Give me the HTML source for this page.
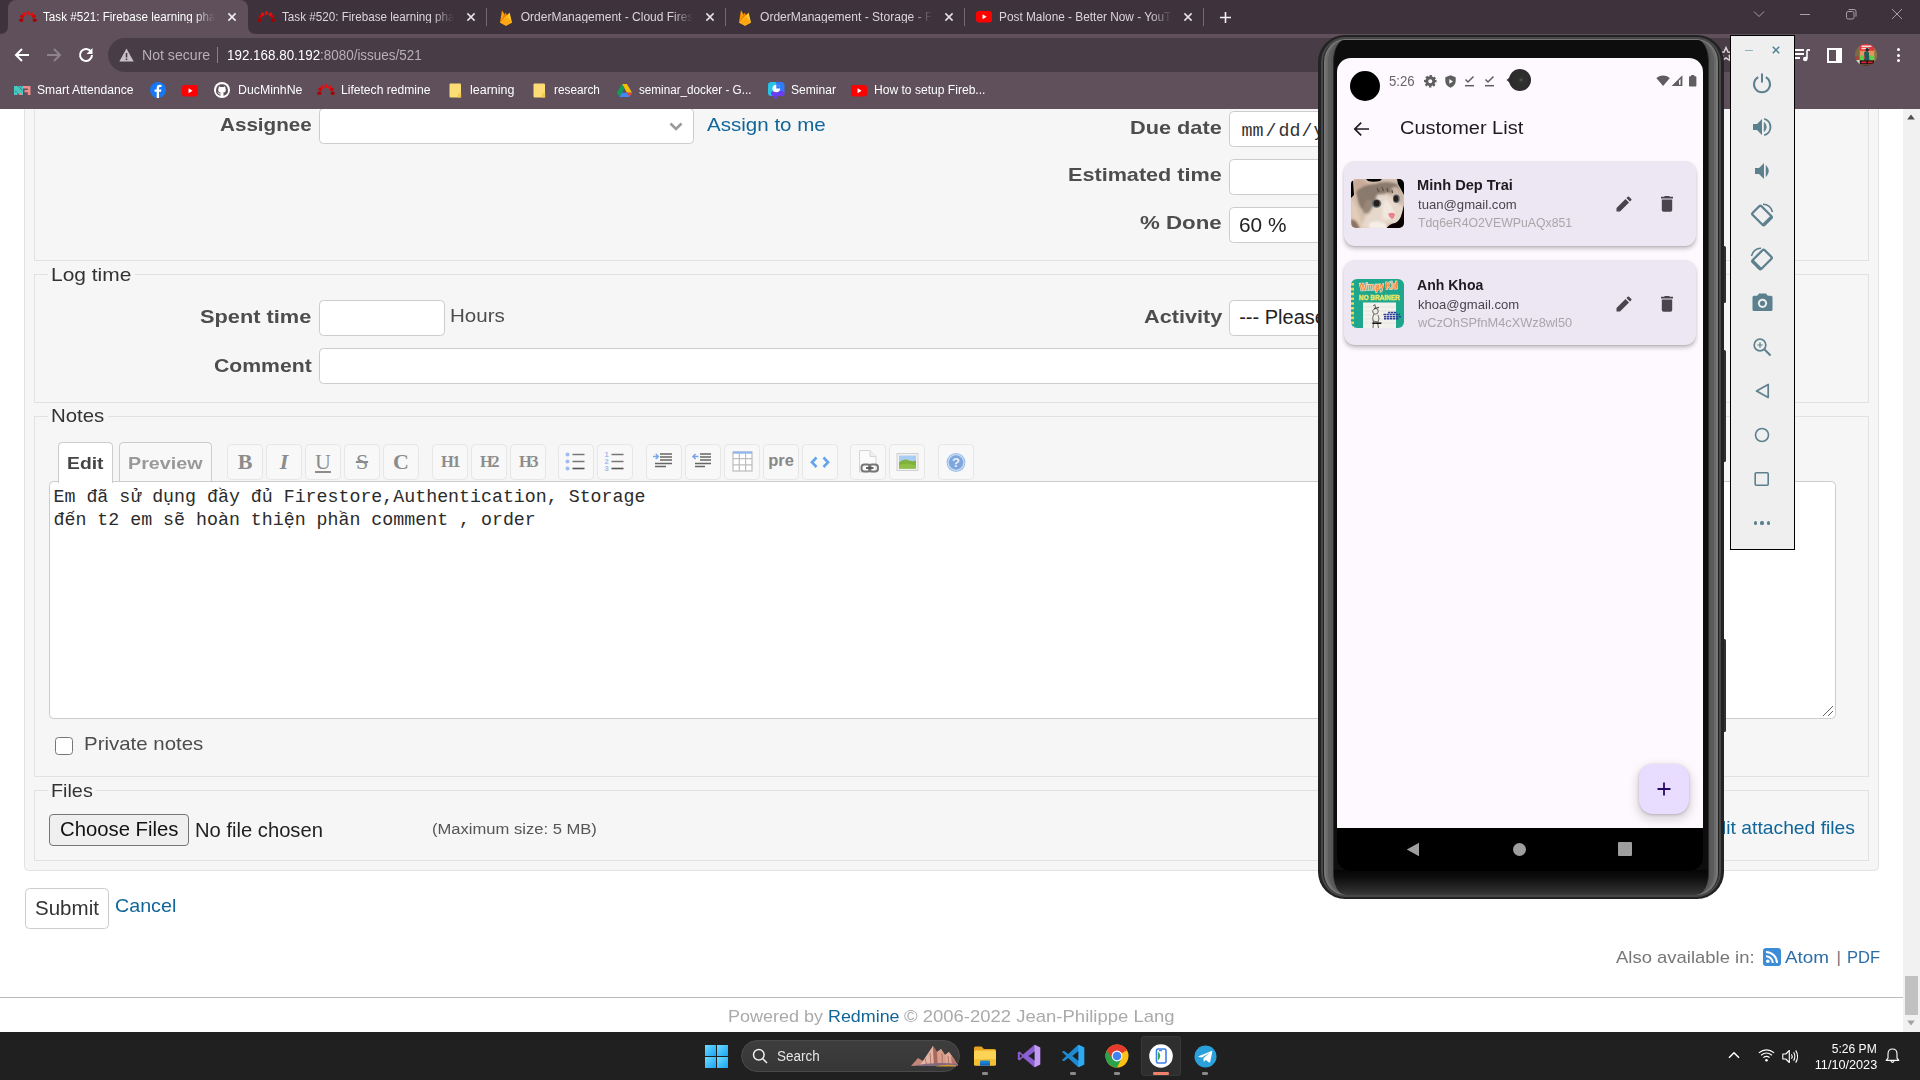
<!DOCTYPE html>
<html><head><meta charset="utf-8"><title>Task #521</title>
<style>
html,body{margin:0;padding:0;background:#fff;}
body{width:1920px;height:1080px;overflow:hidden;position:relative;font-family:"Liberation Sans",sans-serif;}
#root{position:absolute;left:0;top:0;width:1920px;height:1080px;overflow:hidden;}
svg{display:block;overflow:visible}
</style></head><body><div id="root">
<!-- page -->
<div style="position:absolute;left:0px;top:108px;width:1903px;height:924px;background:#fff;"></div>
<div style="position:absolute;left:1903px;top:108px;width:17px;height:924px;background:#f1f1f1;"></div>
<svg style="position:absolute;left:1907px;top:114px;" width="8" height="6" viewBox="0 0 8 6"><path d="M4 0.5 L7.8 5.5 H0.2 Z" fill="#505050"/></svg>
<svg style="position:absolute;left:1907px;top:1020px;" width="8" height="6" viewBox="0 0 8 6"><path d="M4 5.5 L7.8 0.5 H0.2 Z" fill="#a3a3a3"/></svg>
<div style="position:absolute;left:1905px;top:976px;width:13px;height:38.5px;background:#c1c1c1;"></div>
<div style="position:absolute;left:24px;top:90px;width:1855px;height:781px;background:#f6f6f6;box-sizing:border-box;border:1px solid #e2e2e2;border-radius:4.5px;"></div>
<div style="position:absolute;left:34px;top:90px;width:1835px;height:171px;background:transparent;box-sizing:border-box;border:1px solid #e2e2e2;"></div>
<span id="t0" style="position:absolute;top:114.92px;font:700 19px/1 'Liberation Sans',sans-serif;color:#4d4d4d;white-space:pre;left:219.76px;transform-origin:0 0;transform:scaleX(1.0864);">Assignee</span>
<div style="position:absolute;left:319px;top:107.5px;width:375px;height:36px;background:#fff;box-sizing:border-box;border:1px solid #ccc;border-radius:4.5px;"></div>
<svg style="position:absolute;left:668.5px;top:121.5px;" width="14" height="9" viewBox="0 0 14 9"><path d="M1.5 1.5 L7 7 L12.5 1.5" stroke="#9a9a9a" stroke-width="2.6" fill="none"/></svg>
<span id="t1" style="position:absolute;top:114.92px;font:400 19px/1 'Liberation Sans',sans-serif;color:#116699;white-space:pre;left:707.26px;transform-origin:0 0;transform:scaleX(1.0815);">Assign to me</span>
<span id="t2" style="position:absolute;top:117.92px;font:700 19px/1 'Liberation Sans',sans-serif;color:#4d4d4d;white-space:pre;left:1130.27px;transform-origin:0 0;transform:scaleX(1.1437);">Due date</span>
<div style="position:absolute;left:1229px;top:111px;width:200px;height:36px;background:#fff;box-sizing:border-box;border:1px solid #ccc;border-radius:4.5px;"></div>
<span id="t3" style="position:absolute;top:121.97px;font:400 18.3px/1 'Liberation Mono',monospace;color:#333;white-space:pre;left:1241.50px;transform-origin:0 0;">mm</span>
<span id="t4" style="position:absolute;top:121.97px;font:400 18.3px/1 'Liberation Mono',monospace;color:#333;white-space:pre;left:1265.50px;transform-origin:0 0;">/</span>
<span id="t5" style="position:absolute;top:121.97px;font:400 18.3px/1 'Liberation Mono',monospace;color:#333;white-space:pre;left:1278.50px;transform-origin:0 0;">dd</span>
<span id="t6" style="position:absolute;top:121.97px;font:400 18.3px/1 'Liberation Mono',monospace;color:#333;white-space:pre;left:1301.50px;transform-origin:0 0;">/</span>
<span id="t7" style="position:absolute;top:121.97px;font:400 18.3px/1 'Liberation Mono',monospace;color:#333;white-space:pre;left:1313.50px;transform-origin:0 0;">yyyy</span>
<span id="t8" style="position:absolute;top:165.42px;font:700 19px/1 'Liberation Sans',sans-serif;color:#4d4d4d;white-space:pre;left:1068.27px;transform-origin:0 0;transform:scaleX(1.1378);">Estimated time</span>
<div style="position:absolute;left:1229px;top:159px;width:200px;height:36px;background:#fff;box-sizing:border-box;border:1px solid #ccc;border-radius:4.5px;"></div>
<span id="t9" style="position:absolute;top:213.42px;font:700 19px/1 'Liberation Sans',sans-serif;color:#4d4d4d;white-space:pre;left:1140.27px;transform-origin:0 0;transform:scaleX(1.1735);">% Done</span>
<div style="position:absolute;left:1229px;top:207px;width:200px;height:36px;background:#fff;box-sizing:border-box;border:1px solid #ccc;border-radius:4.5px;"></div>
<span id="t10" style="position:absolute;top:214.57px;font:400 20px/1 'Liberation Sans',sans-serif;color:#222;white-space:pre;left:1239.20px;transform-origin:0 0;transform:scaleX(1.0396);">60 %</span>
<div style="position:absolute;left:34px;top:274px;width:1835px;height:129px;background:transparent;box-sizing:border-box;border:1px solid #e2e2e2;"></div>
<div style="position:absolute;left:47.5px;top:268px;width:87px;height:14px;background:#f6f6f6;"></div>
<span id="t11" style="position:absolute;top:264.92px;font:400 19px/1 'Liberation Sans',sans-serif;color:#333;white-space:pre;left:50.77px;transform-origin:0 0;transform:scaleX(1.1016);">Log time</span>
<span id="t12" style="position:absolute;top:307.42px;font:700 19px/1 'Liberation Sans',sans-serif;color:#4d4d4d;white-space:pre;left:200.26px;transform-origin:0 0;transform:scaleX(1.1457);">Spent time</span>
<div style="position:absolute;left:319px;top:299.5px;width:126px;height:36px;background:#fff;box-sizing:border-box;border:1px solid #ccc;border-radius:4.5px;"></div>
<span id="t13" style="position:absolute;top:306.42px;font:400 19px/1 'Liberation Sans',sans-serif;color:#4d4d4d;white-space:pre;left:449.76px;transform-origin:0 0;transform:scaleX(1.0807);">Hours</span>
<span id="t14" style="position:absolute;top:307.42px;font:700 19px/1 'Liberation Sans',sans-serif;color:#4d4d4d;white-space:pre;left:1143.77px;transform-origin:0 0;transform:scaleX(1.1404);">Activity</span>
<div style="position:absolute;left:1229px;top:299.5px;width:200px;height:36px;background:#fff;box-sizing:border-box;border:1px solid #ccc;border-radius:4.5px;"></div>
<span id="t15" style="position:absolute;top:306.57px;font:400 20px/1 'Liberation Sans',sans-serif;color:#222;white-space:pre;left:1239.20px;transform-origin:0 0;">--- Please select ---</span>
<span id="t16" style="position:absolute;top:355.92px;font:700 19px/1 'Liberation Sans',sans-serif;color:#4d4d4d;white-space:pre;left:213.76px;transform-origin:0 0;transform:scaleX(1.1159);">Comment</span>
<div style="position:absolute;left:319px;top:348px;width:1380px;height:36px;background:#fff;box-sizing:border-box;border:1px solid #ccc;border-radius:4.5px;"></div>
<div style="position:absolute;left:34px;top:416px;width:1835px;height:361px;background:transparent;box-sizing:border-box;border:1px solid #e2e2e2;"></div>
<div style="position:absolute;left:47.5px;top:410px;width:60px;height:14px;background:#f6f6f6;"></div>
<span id="t17" style="position:absolute;top:406.42px;font:400 19px/1 'Liberation Sans',sans-serif;color:#333;white-space:pre;left:50.77px;transform-origin:0 0;transform:scaleX(1.0733);">Notes</span>
<div style="position:absolute;left:119px;top:442px;width:93px;height:41px;background:#f8f8f8;box-sizing:border-box;border:1px solid #ccc;border-radius:4.5px 4.5px 0 0;border-bottom:none;"></div>
<span id="t18" style="position:absolute;top:455.03px;font:700 16.5px/1 'Liberation Sans',sans-serif;color:#999;white-space:pre;left:127.93px;transform-origin:0 0;transform:scaleX(1.1941);">Preview</span>
<div style="position:absolute;left:227px;top:444px;width:36px;height:36px;box-sizing:border-box;border:1px solid #e6e6e6;border-radius:4.5px;background:#f8f8f8;"><div style="position:absolute;left:0;top:0;width:34px;height:34px;line-height:34px;text-align:center;font:700 22px/34px 'Liberation Serif',serif;color:#8c8c8c;">B</div></div>
<div style="position:absolute;left:266px;top:444px;width:36px;height:36px;box-sizing:border-box;border:1px solid #e6e6e6;border-radius:4.5px;background:#f8f8f8;"><div style="position:absolute;left:0;top:0;width:34px;height:34px;line-height:34px;text-align:center;font:italic 700 22px/34px 'Liberation Serif',serif;color:#8c8c8c;">I</div></div>
<div style="position:absolute;left:305px;top:444px;width:36px;height:36px;box-sizing:border-box;border:1px solid #e6e6e6;border-radius:4.5px;background:#f8f8f8;"><div style="position:absolute;left:0;top:0;width:34px;height:34px;line-height:34px;text-align:center;font:400 22px/34px 'Liberation Serif',serif;color:#8c8c8c;text-decoration:underline;">U</div></div>
<div style="position:absolute;left:344px;top:444px;width:36px;height:36px;box-sizing:border-box;border:1px solid #e6e6e6;border-radius:4.5px;background:#f8f8f8;"><div style="position:absolute;left:0;top:0;width:34px;height:34px;line-height:34px;text-align:center;font:400 22px/34px 'Liberation Serif',serif;color:#8c8c8c;text-decoration:line-through;">S</div></div>
<div style="position:absolute;left:383px;top:444px;width:36px;height:36px;box-sizing:border-box;border:1px solid #e6e6e6;border-radius:4.5px;background:#f8f8f8;"><div style="position:absolute;left:0;top:0;width:34px;height:34px;line-height:34px;text-align:center;font:700 22px/34px 'Liberation Serif',serif;color:#8c8c8c;">C</div></div>
<div style="position:absolute;left:432px;top:444px;width:36px;height:36px;box-sizing:border-box;border:1px solid #e6e6e6;border-radius:4.5px;background:#f8f8f8;"><div style="position:absolute;left:0;top:0;width:34px;height:34px;line-height:34px;text-align:center;font:700 16.5px/34px 'Liberation Serif',serif;color:#8c8c8c;letter-spacing:-1.5px;">H1</div></div>
<div style="position:absolute;left:471px;top:444px;width:36px;height:36px;box-sizing:border-box;border:1px solid #e6e6e6;border-radius:4.5px;background:#f8f8f8;"><div style="position:absolute;left:0;top:0;width:34px;height:34px;line-height:34px;text-align:center;font:700 16.5px/34px 'Liberation Serif',serif;color:#8c8c8c;letter-spacing:-1.5px;">H2</div></div>
<div style="position:absolute;left:510px;top:444px;width:36px;height:36px;box-sizing:border-box;border:1px solid #e6e6e6;border-radius:4.5px;background:#f8f8f8;"><div style="position:absolute;left:0;top:0;width:34px;height:34px;line-height:34px;text-align:center;font:700 16.5px/34px 'Liberation Serif',serif;color:#8c8c8c;letter-spacing:-1.5px;">H3</div></div>
<div style="position:absolute;left:558px;top:444px;width:36px;height:36px;box-sizing:border-box;border:1px solid #e6e6e6;border-radius:4.5px;background:#f8f8f8;"><svg width="34" height="34" viewBox="0 0 34 34" style="position:absolute;left:0;top:0"><g fill="#9dbdf0"><circle cx="8.5" cy="9.5" r="2"/><circle cx="8.5" cy="16.5" r="2"/><circle cx="8.5" cy="23.5" r="2"/></g><g stroke="#777" stroke-width="1.6"><path d="M13.5 9.5 H25.5 M13.5 16.5 H25.5"/><path d="M13.5 23.5 H25.5" stroke="#555"/></g></svg></div>
<div style="position:absolute;left:597px;top:444px;width:36px;height:36px;box-sizing:border-box;border:1px solid #e6e6e6;border-radius:4.5px;background:#f8f8f8;"><svg width="34" height="34" viewBox="0 0 34 34" style="position:absolute;left:0;top:0"><g fill="#9dbdf0" font-family="Liberation Sans" font-size="7.5" font-weight="700"><text x="6.5" y="12">1</text><text x="6.5" y="19">2</text><text x="6.5" y="26">3</text></g><g stroke="#777" stroke-width="1.6"><path d="M13.5 9.5 H25.5 M13.5 16.5 H25.5"/><path d="M13.5 23.5 H25.5" stroke="#555"/></g></svg></div>
<div style="position:absolute;left:646px;top:444px;width:36px;height:36px;box-sizing:border-box;border:1px solid #e6e6e6;border-radius:4.5px;background:#f8f8f8;"><svg width="34" height="34" viewBox="0 0 34 34" style="position:absolute;left:0;top:0"><g stroke="#666" stroke-width="1.5"><path d="M13 9 H25 M13 12 H25 M13 15 H25"/><path d="M8 18.5 H25 M8 21.5 H19"/></g><path d="M6 11.5 H11 M8.8 9 L11.3 11.5 L8.8 14" stroke="#7aa7ea" stroke-width="1.6" fill="none"/></svg></div>
<div style="position:absolute;left:685px;top:444px;width:36px;height:36px;box-sizing:border-box;border:1px solid #e6e6e6;border-radius:4.5px;background:#f8f8f8;"><svg width="34" height="34" viewBox="0 0 34 34" style="position:absolute;left:0;top:0"><g stroke="#666" stroke-width="1.5"><path d="M14 9 H25 M14 12 H25 M14 15 H25"/><path d="M9 18.5 H25 M9 21.5 H19"/></g><path d="M7 11.5 H12.5 M9.6 9 L7 11.5 L9.6 14" stroke="#7aa7ea" stroke-width="1.6" fill="none"/></svg></div>
<div style="position:absolute;left:724px;top:444px;width:36px;height:36px;box-sizing:border-box;border:1px solid #e6e6e6;border-radius:4.5px;background:#f8f8f8;"><svg width="34" height="34" viewBox="0 0 34 34" style="position:absolute;left:0;top:0"><rect x="8" y="7" width="19" height="19" fill="#fff" stroke="#bdbdbd" stroke-width="1.2"/><rect x="8" y="6.5" width="19" height="2.2" fill="#8fb5ee"/><path d="M14.3 8 V26 M20.6 8 V26 M8 13.7 H27 M8 19.8 H27" stroke="#bdbdbd" stroke-width="1.2"/></svg></div>
<div style="position:absolute;left:763px;top:444px;width:36px;height:36px;box-sizing:border-box;border:1px solid #e6e6e6;border-radius:4.5px;background:#f8f8f8;"><div style="position:absolute;left:0;top:0;width:34px;height:34px;text-align:center;font:700 16.5px/31px 'Liberation Sans',sans-serif;color:#888;">pre</div></div>
<div style="position:absolute;left:802px;top:444px;width:36px;height:36px;box-sizing:border-box;border:1px solid #e6e6e6;border-radius:4.5px;background:#f8f8f8;"><svg width="34" height="34" viewBox="0 0 34 34" style="position:absolute;left:0;top:0"><path d="M13.5 12.5 L9 17.3 L13.5 22 M20.5 12.5 L25 17.3 L20.5 22" stroke="#62a5ee" stroke-width="2.6" fill="none"/></svg></div>
<div style="position:absolute;left:850px;top:444px;width:36px;height:36px;box-sizing:border-box;border:1px solid #e6e6e6;border-radius:4.5px;background:#f8f8f8;"><svg width="34" height="34" viewBox="0 0 34 34" style="position:absolute;left:0;top:0"><path d="M8.5 5.5 H19 L25 11.5 V27 H8.5 Z" fill="#fbfbfb" stroke="#d5d5d5" stroke-width="1"/><path d="M19 5.5 V11.5 H25" fill="#eee" stroke="#d5d5d5"/><rect x="10.5" y="19.5" width="9" height="7" rx="3" fill="none" stroke="#777" stroke-width="2"/><rect x="18" y="19.5" width="9" height="7" rx="3" fill="none" stroke="#777" stroke-width="2"/><path d="M15 23 H22.5" stroke="#555" stroke-width="1.8"/></svg></div>
<div style="position:absolute;left:889px;top:444px;width:36px;height:36px;box-sizing:border-box;border:1px solid #e6e6e6;border-radius:4.5px;background:#f8f8f8;"><svg width="34" height="34" viewBox="0 0 34 34" style="position:absolute;left:0;top:0"><rect x="7" y="8.5" width="21" height="17" fill="#f2f2f2" stroke="#d0d0d0"/><rect x="9" y="10.5" width="17" height="13" fill="#a9cdf2"/><path d="M9 23.5 V17.5 Q14 13 19 15.5 Q23 17 26 15.5 V23.5 Z" fill="#7fb13d"/><path d="M9 23.5 V20 Q17 17.5 26 20.5 V23.5 Z" fill="#8fbf45"/></svg></div>
<div style="position:absolute;left:938px;top:444px;width:36px;height:36px;box-sizing:border-box;border:1px solid #e6e6e6;border-radius:4.5px;background:#f8f8f8;"><svg width="34" height="34" viewBox="0 0 34 34" style="position:absolute;left:0;top:0"><circle cx="17" cy="17.5" r="9.5" fill="#9fc0ea"/><circle cx="17" cy="17.5" r="7.8" fill="#7ea6dc" stroke="#c6daf3" stroke-width="1.2"/><text x="17" y="22.3" text-anchor="middle" font-family="Liberation Sans" font-weight="700" font-size="13" fill="#e8f0fb">?</text></svg></div>
<div style="position:absolute;left:49px;top:481px;width:1787px;height:238px;background:#fff;box-sizing:border-box;border:1px solid #ccc;border-radius:4.5px;"></div>
<div style="position:absolute;left:58px;top:442px;width:55px;height:41px;background:#fff;box-sizing:border-box;border:1px solid #ccc;border-radius:4.5px 4.5px 0 0;border-bottom:none;"></div>
<span id="t19" style="position:absolute;top:455.03px;font:700 16.5px/1 'Liberation Sans',sans-serif;color:#444;white-space:pre;left:66.93px;transform-origin:0 0;transform:scaleX(1.1703);">Edit</span>
<span id="t20" style="position:absolute;top:488.49px;font:400 18.27px/1 'Liberation Mono',monospace;color:#2b2b2b;white-space:pre;left:53.50px;transform-origin:0 0;">Em đã sử dụng đầy đủ Firestore,Authentication, Storage</span>
<span id="t21" style="position:absolute;top:511.49px;font:400 18.27px/1 'Liberation Mono',monospace;color:#2b2b2b;white-space:pre;left:53.50px;transform-origin:0 0;">đến t2 em sẽ hoàn thiện phần comment , order</span>
<svg style="position:absolute;left:1822px;top:705px;" width="12" height="12" viewBox="0 0 12 12"><path d="M11 1 L1 11 M11 6 L6 11" stroke="#666" stroke-width="1"/></svg>
<div style="position:absolute;left:55px;top:737px;width:18px;height:18px;background:#fff;box-sizing:border-box;border:1px solid #767676;border-radius:3.5px;border-width:1.5px;"></div>
<span id="t22" style="position:absolute;top:733.92px;font:400 19px/1 'Liberation Sans',sans-serif;color:#4d4d4d;white-space:pre;left:84.27px;transform-origin:0 0;transform:scaleX(1.0755);">Private notes</span>
<div style="position:absolute;left:34px;top:790px;width:1835px;height:71px;background:transparent;box-sizing:border-box;border:1px solid #e2e2e2;"></div>
<div style="position:absolute;left:47.5px;top:784px;width:48px;height:14px;background:#f6f6f6;"></div>
<span id="t23" style="position:absolute;top:780.92px;font:400 19px/1 'Liberation Sans',sans-serif;color:#333;white-space:pre;left:50.77px;transform-origin:0 0;transform:scaleX(1.0412);">Files</span>
<div style="position:absolute;left:49px;top:814px;width:139.5px;height:32px;background:#efefef;box-sizing:border-box;border:1px solid #767676;border-radius:4px;border-width:1.5px;"></div>
<span id="t24" style="position:absolute;top:818.57px;font:400 20px/1 'Liberation Sans',sans-serif;color:#111;white-space:pre;left:59.70px;transform-origin:0 0;transform:scaleX(1.0144);">Choose Files</span>
<span id="t25" style="position:absolute;top:819.57px;font:400 20px/1 'Liberation Sans',sans-serif;color:#222;white-space:pre;left:194.70px;transform-origin:0 0;transform:scaleX(1.0091);">No file chosen</span>
<span id="t26" style="position:absolute;top:820.88px;font:400 15.5px/1 'Liberation Sans',sans-serif;color:#555;white-space:pre;left:431.99px;transform-origin:0 0;transform:scaleX(1.0694);">(Maximum size: 5 MB)</span>
<span id="t27" style="position:absolute;top:818.42px;font:400 19px/1 'Liberation Sans',sans-serif;color:#116699;white-space:pre;right:65.01px;transform-origin:100% 0;transform:scaleX(1.0153);">Edit attached files</span>
<div style="position:absolute;left:24.5px;top:887.5px;width:84px;height:41px;background:#fff;box-sizing:border-box;border:1px solid #ccc;border-radius:4.5px;"></div>
<span id="t28" style="position:absolute;top:897.57px;font:400 20px/1 'Liberation Sans',sans-serif;color:#333;white-space:pre;left:34.70px;transform-origin:0 0;transform:scaleX(1.0265);">Submit</span>
<span id="t29" style="position:absolute;top:896.42px;font:400 19px/1 'Liberation Sans',sans-serif;color:#116699;white-space:pre;left:114.77px;transform-origin:0 0;transform:scaleX(1.0359);">Cancel</span>
<span id="t30" style="position:absolute;top:948.61px;font:400 17px/1 'Liberation Sans',sans-serif;color:#777;white-space:pre;left:1616.39px;transform-origin:0 0;transform:scaleX(1.0859);">Also available in:</span>
<svg style="position:absolute;left:1763px;top:948px;" width="18" height="18" viewBox="0 0 18 18"><rect x="0" y="0" width="18" height="18" rx="3" fill="#3c8dd6"/><circle cx="4.8" cy="13.2" r="1.8" fill="#fff"/><path d="M3 8.2 A6.8 6.8 0 0 1 9.8 15 M3 4 A11 11 0 0 1 14 15" stroke="#fff" stroke-width="2" fill="none"/></svg>
<span id="t31" style="position:absolute;top:948.61px;font:400 17px/1 'Liberation Sans',sans-serif;color:#2a6ea8;white-space:pre;left:1784.89px;transform-origin:0 0;transform:scaleX(1.1097);">Atom</span>
<span id="t32" style="position:absolute;top:948.61px;font:400 17px/1 'Liberation Sans',sans-serif;color:#777;white-space:pre;left:1836.49px;transform-origin:0 0;">|</span>
<span id="t33" style="position:absolute;top:948.61px;font:400 17px/1 'Liberation Sans',sans-serif;color:#2a6ea8;white-space:pre;left:1846.89px;transform-origin:0 0;transform:scaleX(0.9718);">PDF</span>
<div style="position:absolute;left:0px;top:997px;width:1903px;height:1px;background:#bbb;"></div>
<span id="t34" style="position:absolute;top:1007.61px;font:400 17px/1 'Liberation Sans',sans-serif;color:#aaa;white-space:pre;left:727.89px;transform-origin:0 0;transform:scaleX(1.0586);">Powered by</span>
<span id="t35" style="position:absolute;top:1007.61px;font:400 17px/1 'Liberation Sans',sans-serif;color:#116699;white-space:pre;left:827.89px;transform-origin:0 0;transform:scaleX(1.0513);">Redmine</span>
<span id="t36" style="position:absolute;top:1007.61px;font:400 17px/1 'Liberation Sans',sans-serif;color:#aaa;white-space:pre;left:903.89px;transform-origin:0 0;transform:scaleX(1.0873);">© 2006-2022 Jean-Philippe Lang</span>
<!-- chrome -->
<div style="position:absolute;left:0px;top:0px;width:1920px;height:34px;background:#3e333d;"></div>
<div style="position:absolute;left:0px;top:34px;width:1920px;height:74.6px;background:#5f505b;"></div>
<div style="position:absolute;left:8px;top:0px;width:240px;height:34px;background:#5f505b;border-radius:8px 8px 0 0;"></div>
<svg style="position:absolute;left:0px;top:26px;" width="8" height="8" viewBox="0 0 8 8"><path d="M8 0 L8 8 L0 8 Q8 8 8 0 Z" fill="#5f505b"/></svg>
<svg style="position:absolute;left:248px;top:26px;" width="8" height="8" viewBox="0 0 8 8"><path d="M0 0 L0 8 L8 8 Q0 8 0 0 Z" fill="#5f505b"/></svg>
<div style="position:absolute;left:485.5px;top:8px;width:1px;height:18px;background:#756a74;"></div>
<div style="position:absolute;left:725.0px;top:8px;width:1px;height:18px;background:#756a74;"></div>
<div style="position:absolute;left:964.0px;top:8px;width:1px;height:18px;background:#756a74;"></div>
<div style="position:absolute;left:1203.0px;top:8px;width:1px;height:18px;background:#756a74;"></div>
<svg style="position:absolute;left:0;top:0" width="1920" height="120" viewBox="0 0 1920 120"><rect x="19.85" y="18.40" width="2.90" height="3.80" rx="0.7" fill="#a80000" transform="rotate(-90.0 21.30 20.30)"/><rect x="20.63" y="14.80" width="2.90" height="3.50" rx="0.7" fill="#d40000" transform="rotate(-62.0 22.08 16.55)"/><rect x="22.71" y="12.46" width="2.90" height="3.50" rx="0.7" fill="#e60f0f" transform="rotate(-35.0 24.16 14.21)"/><rect x="26.55" y="11.25" width="2.90" height="3.50" rx="0.7" fill="#e60f0f" transform="rotate(0.0 28.00 13.00)"/><rect x="30.39" y="12.46" width="2.90" height="3.50" rx="0.7" fill="#e60f0f" transform="rotate(35.0 31.84 14.21)"/><rect x="32.47" y="14.80" width="2.90" height="3.50" rx="0.7" fill="#d40000" transform="rotate(62.0 33.92 16.55)"/><rect x="33.25" y="18.40" width="2.90" height="3.80" rx="0.7" fill="#a80000" transform="rotate(90.0 34.70 20.30)"/></svg>
<span id="t37" style="position:absolute;top:11.14px;font:400 12px/1 'Liberation Sans',sans-serif;color:#fff;white-space:pre;left:43.22px;transform-origin:0 0;transform:scaleX(0.9717);-webkit-mask-image:linear-gradient(90deg,#000 88%,transparent 100%);">Task #521: Firebase learning pha</span>
<svg style="position:absolute;left:226px;top:11px;" width="12" height="12" viewBox="0 0 12 12"><path d="M2.4 2.4 L9.6 9.6 M9.6 2.4 L2.4 9.6" stroke="#f3eff2" stroke-width="1.5" fill="none"/></svg>
<svg style="position:absolute;left:0;top:0" width="1920" height="120" viewBox="0 0 1920 120"><rect x="258.35" y="18.40" width="2.90" height="3.80" rx="0.7" fill="#a80000" transform="rotate(-90.0 259.80 20.30)"/><rect x="259.13" y="14.80" width="2.90" height="3.50" rx="0.7" fill="#d40000" transform="rotate(-62.0 260.58 16.55)"/><rect x="261.21" y="12.46" width="2.90" height="3.50" rx="0.7" fill="#e60f0f" transform="rotate(-35.0 262.66 14.21)"/><rect x="265.05" y="11.25" width="2.90" height="3.50" rx="0.7" fill="#e60f0f" transform="rotate(0.0 266.50 13.00)"/><rect x="268.89" y="12.46" width="2.90" height="3.50" rx="0.7" fill="#e60f0f" transform="rotate(35.0 270.34 14.21)"/><rect x="270.97" y="14.80" width="2.90" height="3.50" rx="0.7" fill="#d40000" transform="rotate(62.0 272.42 16.55)"/><rect x="271.75" y="18.40" width="2.90" height="3.80" rx="0.7" fill="#a80000" transform="rotate(90.0 273.20 20.30)"/></svg>
<span id="t38" style="position:absolute;top:11.14px;font:400 12px/1 'Liberation Sans',sans-serif;color:#dcd5da;white-space:pre;left:282.22px;transform-origin:0 0;transform:scaleX(0.9717);-webkit-mask-image:linear-gradient(90deg,#000 88%,transparent 100%);">Task #520: Firebase learning pha</span>
<svg style="position:absolute;left:464.5px;top:11px;" width="12" height="12" viewBox="0 0 12 12"><path d="M2.4 2.4 L9.6 9.6 M9.6 2.4 L2.4 9.6" stroke="#e8e2e7" stroke-width="1.5" fill="none"/></svg>
<svg style="position:absolute;left:499px;top:8.5px;" width="14" height="17" viewBox="0 0 14 17"><path d="M1 13.5 L3 1.2 L6 6.2 Z" fill="#ffa000"/><path d="M1 13.5 L6.6 3.4 L8.6 7 Z" fill="#f57c00"/><path d="M1 13.5 L10.6 3.6 L13 13.5 L7 16.8 Z" fill="#ffca28"/><path d="M1 13.5 L7 16.8 L13 13.5 L8.2 7.6 Z" fill="#ffa712"/></svg>
<span id="t39" style="position:absolute;top:11.14px;font:400 12px/1 'Liberation Sans',sans-serif;color:#dcd5da;white-space:pre;left:520.72px;transform-origin:0 0;-webkit-mask-image:linear-gradient(90deg,#000 88%,transparent 100%);">OrderManagement - Cloud Fires</span>
<svg style="position:absolute;left:704px;top:11px;" width="12" height="12" viewBox="0 0 12 12"><path d="M2.4 2.4 L9.6 9.6 M9.6 2.4 L2.4 9.6" stroke="#e8e2e7" stroke-width="1.5" fill="none"/></svg>
<svg style="position:absolute;left:738px;top:8.5px;" width="14" height="17" viewBox="0 0 14 17"><path d="M1 13.5 L3 1.2 L6 6.2 Z" fill="#ffa000"/><path d="M1 13.5 L6.6 3.4 L8.6 7 Z" fill="#f57c00"/><path d="M1 13.5 L10.6 3.6 L13 13.5 L7 16.8 Z" fill="#ffca28"/><path d="M1 13.5 L7 16.8 L13 13.5 L8.2 7.6 Z" fill="#ffa712"/></svg>
<span id="t40" style="position:absolute;top:11.14px;font:400 12px/1 'Liberation Sans',sans-serif;color:#dcd5da;white-space:pre;left:759.72px;transform-origin:0 0;transform:scaleX(1.0060);-webkit-mask-image:linear-gradient(90deg,#000 88%,transparent 100%);">OrderManagement - Storage - F</span>
<svg style="position:absolute;left:943px;top:11px;" width="12" height="12" viewBox="0 0 12 12"><path d="M2.4 2.4 L9.6 9.6 M9.6 2.4 L2.4 9.6" stroke="#e8e2e7" stroke-width="1.5" fill="none"/></svg>
<svg style="position:absolute;left:976px;top:11.3px;" width="16" height="11.5" viewBox="0 0 16 11.5"><rect x="0" y="0" width="16" height="11.5" rx="3" fill="#ff0000"/><path d="M6.56 3.22 L6.56 8.28 L10.56 5.75 Z" fill="#fff"/></svg>
<span id="t41" style="position:absolute;top:11.14px;font:400 12px/1 'Liberation Sans',sans-serif;color:#dcd5da;white-space:pre;left:999.22px;transform-origin:0 0;transform:scaleX(0.9868);-webkit-mask-image:linear-gradient(90deg,#000 88%,transparent 100%);">Post Malone - Better Now - YouT</span>
<svg style="position:absolute;left:1182px;top:11px;" width="12" height="12" viewBox="0 0 12 12"><path d="M2.4 2.4 L9.6 9.6 M9.6 2.4 L2.4 9.6" stroke="#e8e2e7" stroke-width="1.5" fill="none"/></svg>
<svg style="position:absolute;left:1219px;top:10.5px;" width="13" height="13" viewBox="0 0 13 13"><path d="M6.5 1 V12 M1 6.5 H12" stroke="#f3eff2" stroke-width="1.6" fill="none"/></svg>
<svg style="position:absolute;left:1753px;top:8px;" width="12" height="12" viewBox="0 0 12 12"><path d="M1 3.5 L6 8.5 L11 3.5" stroke="#a99fa8" stroke-width="1" fill="none"/></svg>
<div style="position:absolute;left:1800px;top:14px;width:10px;height:1px;background:#a99fa8;"></div>
<svg style="position:absolute;left:1845px;top:8px;" width="12" height="12" viewBox="0 0 12 12"><rect x="1.5" y="3.5" width="7.5" height="7.5" rx="1.6" stroke="#a99fa8" stroke-width="1" fill="none"/><path d="M3.6 1.5 H9 Q11 1.5 11 3.5 V8.6" stroke="#a99fa8" stroke-width="1" fill="none"/></svg>
<svg style="position:absolute;left:1891px;top:8px;" width="12" height="12" viewBox="0 0 12 12"><path d="M1 1 L11 11 M11 1 L1 11" stroke="#a99fa8" stroke-width="1" fill="none"/></svg>
<svg style="position:absolute;left:14px;top:47px;" width="16" height="16" viewBox="0 0 16 16"><path d="M15 8 H2.5 M8 2 L2 8 L8 14" stroke="#fff" stroke-width="2" fill="none"/></svg>
<svg style="position:absolute;left:46px;top:47px;" width="16" height="16" viewBox="0 0 16 16"><path d="M1 8 H13.5 M8 2 L14 8 L8 14" stroke="#8f838d" stroke-width="2" fill="none"/></svg>
<svg style="position:absolute;left:78px;top:47px;" width="16" height="16" viewBox="0 0 16 16"><path d="M13.2 5 A6 6 0 1 0 14 8" stroke="#fff" stroke-width="2" fill="none"/><path d="M14.5 1 V7 H8.5 Z" fill="#fff"/></svg>
<div style="position:absolute;left:108px;top:38px;width:1640px;height:34px;background:#483c47;border-radius:17px;"></div>
<svg style="position:absolute;left:118.5px;top:47.5px;" width="15" height="14" viewBox="0 0 15 14"><path d="M7.5 0.5 L14.7 13.5 H0.3 Z" fill="#c9c1c7"/><rect x="6.7" y="5" width="1.6" height="4.5" fill="#483c47"/><rect x="6.7" y="10.5" width="1.6" height="1.6" fill="#483c47"/></svg>
<span id="t42" style="position:absolute;top:47.95px;font:400 14px/1 'Liberation Sans',sans-serif;color:#b9afb7;white-space:pre;left:141.59px;transform-origin:0 0;transform:scaleX(1.0070);">Not secure</span>
<div style="position:absolute;left:217px;top:47px;width:1px;height:16px;background:#8a7f88;"></div>
<span id="t43" style="position:absolute;top:47.95px;font:400 14px/1 'Liberation Sans',sans-serif;color:#fff;white-space:pre;left:226.59px;transform-origin:0 0;transform:scaleX(0.9574);">192.168.80.192</span>
<span id="t44" style="position:absolute;top:47.95px;font:400 14px/1 'Liberation Sans',sans-serif;color:#b9afb7;white-space:pre;left:320.09px;transform-origin:0 0;transform:scaleX(0.9605);">:8080/issues/521</span>
<svg style="position:absolute;left:1718px;top:46px;" width="16" height="16" viewBox="0 0 16 16"><path d="M8 1.5 L10 6 L15 6.5 L11.2 9.8 L12.4 14.7 L8 12 L3.6 14.7 L4.8 9.8 L1 6.5 L6 6 Z" stroke="#d8d0d6" stroke-width="1.5" fill="none"/></svg>
<svg style="position:absolute;left:1793px;top:47px;" width="18" height="16" viewBox="0 0 18 16"><path d="M1 3 H11 M1 7 H11 M1 11 H7" stroke="#fff" stroke-width="1.8"/><path d="M14 3 V11.5" stroke="#fff" stroke-width="1.6"/><circle cx="12.3" cy="12" r="2.3" fill="#fff"/><path d="M14 3 H17" stroke="#fff" stroke-width="1.8"/></svg>
<svg style="position:absolute;left:1826.5px;top:47.5px;" width="15" height="15" viewBox="0 0 15 15"><rect x="1" y="1" width="13" height="13" fill="none" stroke="#fff" stroke-width="2"/><rect x="9" y="1" width="5" height="13" fill="#fff"/></svg>
<div style="position:absolute;left:1855px;top:43.5px;width:22px;height:22px;border-radius:50%;overflow:hidden;background:#6b5a3c;"><svg width="22" height="22" viewBox="0 0 22 22" style="position:absolute;left:0;top:0"><defs><filter id="avb" x="-10%" y="-10%" width="120%" height="120%"><feGaussianBlur stdDeviation="0.45"/></filter></defs><g filter="url(#avb)"><rect x="0" y="0" width="5" height="22" fill="#7a6a44"/><rect x="0" y="12" width="5" height="5" fill="#a0483a"/><rect x="1" y="16" width="4" height="4" fill="#d8d4cc"/><rect x="19" y="0" width="3" height="22" fill="#8a7848"/><rect x="4.8" y="0" width="14.4" height="22" fill="#e9935c"/><rect x="4.8" y="0" width="14.4" height="6.8" fill="#e2343a"/><path d="M6.5 2.2 H16.5 M6.5 4.4 H14" stroke="#f7d9d6" stroke-width="1.5"/><rect x="4.8" y="11.5" width="14.4" height="5" fill="#62cf4c"/><path d="M9.2 8 Q11.5 6.4 13.8 8 L14.4 16.5 H9 Z" fill="#1f5a5c"/><circle cx="12.2" cy="5.8" r="1.7" fill="#222"/><path d="M9.2 10.5 L8.5 14.5 L10.2 14.8 Z" fill="#e8414a"/><rect x="4.8" y="16.3" width="14.4" height="4" fill="#1a0f14"/><path d="M6.3 18.3 H11.5 M13 18.3 H17.7" stroke="#d3262e" stroke-width="1.8"/><rect x="4.8" y="20.3" width="14.4" height="2" fill="#4a3c34"/></g></svg></div>
<div style="position:absolute;left:1896.7px;top:48.0px;width:3.2px;height:3.2px;border-radius:50%;background:#fff"></div>
<div style="position:absolute;left:1896.7px;top:53.5px;width:3.2px;height:3.2px;border-radius:50%;background:#fff"></div>
<div style="position:absolute;left:1896.7px;top:59.0px;width:3.2px;height:3.2px;border-radius:50%;background:#fff"></div>
<svg style="position:absolute;left:13.5px;top:85.5px;" width="17" height="9" viewBox="0 0 17 9"><path d="M0 0 H4 L8 4.5 V0 H9 V9 H5.5 L1.5 4.5 V9 H0 Z" fill="#43c9c2"/><path d="M0 6 H3.5 V9 H0 Z M4.5 0 H7 L8 1.5 V3.5 Z" fill="#43c9c2"/><path d="M9 0 H16.5 V9 H13.8 V6.2 H10.5 V4 H13.8 V2.4 H9 Z" fill="#f08c8c"/><path d="M5.5 5.5 L8.5 9 H6 Z" fill="#f08c8c"/></svg>
<span id="t45" style="position:absolute;top:83.64px;font:400 12px/1 'Liberation Sans',sans-serif;color:#fff;white-space:pre;left:37.22px;transform-origin:0 0;transform:scaleX(1.0110);">Smart Attendance</span>
<svg style="position:absolute;left:150px;top:82px;" width="16" height="16" viewBox="0 0 16 16"><circle cx="8" cy="8" r="8" fill="#1877f2"/><path d="M9 16 V9.8 H11 L11.4 7.4 H9 V6 Q9 4.9 10.2 4.9 H11.5 V2.9 Q10.6 2.7 9.7 2.7 Q6.7 2.7 6.7 5.7 V7.4 H4.6 V9.8 H6.7 V16 Z" fill="#fff"/></svg>
<svg style="position:absolute;left:182px;top:84.5px;" width="16" height="11.5" viewBox="0 0 16 11.5"><rect x="0" y="0" width="16" height="11.5" rx="3" fill="#ff0000"/><path d="M6.56 3.22 L6.56 8.28 L10.56 5.75 Z" fill="#fff"/></svg>
<svg style="position:absolute;left:214px;top:82px;" width="16" height="16" viewBox="0 0 16 16"><circle cx="8" cy="8" r="8" fill="#fff"/><path d="M8 2.2 A5.9 5.9 0 0 0 6.1 13.7 C6.4 13.8 6.5 13.6 6.5 13.4 V12.3 C4.9 12.7 4.5 11.6 4.5 11.6 C4.2 10.9 3.8 10.7 3.8 10.7 C3.3 10.3 3.9 10.3 3.9 10.3 C4.5 10.4 4.8 10.9 4.8 10.9 C5.3 11.8 6.2 11.6 6.5 11.4 C6.6 11 6.7 10.8 6.9 10.6 C5.6 10.5 4.2 10 4.2 7.7 C4.2 7 4.4 6.5 4.8 6.1 C4.7 5.9 4.5 5.3 4.9 4.5 C4.9 4.5 5.4 4.3 6.5 5.1 A5.6 5.6 0 0 1 9.5 5.1 C10.6 4.3 11.1 4.5 11.1 4.5 C11.5 5.3 11.3 5.9 11.2 6.1 C11.6 6.5 11.8 7 11.8 7.7 C11.8 10 10.4 10.5 9.1 10.6 C9.3 10.8 9.5 11.2 9.5 11.7 V13.4 C9.5 13.6 9.6 13.8 9.9 13.7 A5.9 5.9 0 0 0 8 2.2 Z" fill="#5f505b"/></svg>
<span id="t46" style="position:absolute;top:83.64px;font:400 12px/1 'Liberation Sans',sans-serif;color:#fff;white-space:pre;left:237.52px;transform-origin:0 0;transform:scaleX(1.0277);">DucMinhNe</span>
<svg style="position:absolute;left:0;top:0" width="1920" height="120" viewBox="0 0 1920 120"><rect x="317.85" y="91.40" width="2.90" height="3.80" rx="0.7" fill="#a80000" transform="rotate(-90.0 319.30 93.30)"/><rect x="318.63" y="87.80" width="2.90" height="3.50" rx="0.7" fill="#d40000" transform="rotate(-62.0 320.08 89.55)"/><rect x="320.71" y="85.46" width="2.90" height="3.50" rx="0.7" fill="#e60f0f" transform="rotate(-35.0 322.16 87.21)"/><rect x="324.55" y="84.25" width="2.90" height="3.50" rx="0.7" fill="#e60f0f" transform="rotate(0.0 326.00 86.00)"/><rect x="328.39" y="85.46" width="2.90" height="3.50" rx="0.7" fill="#e60f0f" transform="rotate(35.0 329.84 87.21)"/><rect x="330.47" y="87.80" width="2.90" height="3.50" rx="0.7" fill="#d40000" transform="rotate(62.0 331.92 89.55)"/><rect x="331.25" y="91.40" width="2.90" height="3.80" rx="0.7" fill="#a80000" transform="rotate(90.0 332.70 93.30)"/></svg>
<span id="t47" style="position:absolute;top:83.64px;font:400 12px/1 'Liberation Sans',sans-serif;color:#fff;white-space:pre;left:341.22px;transform-origin:0 0;transform:scaleX(1.0081);">Lifetech redmine</span>
<svg style="position:absolute;left:449px;top:82.5px;" width="13" height="15" viewBox="0 0 13 15"><path d="M0.5 1.5 Q0.5 0.5 1.5 0.5 L11 0.5 Q12 0.5 12 1.5 L12 13.5 Q12 14.5 11 14.5 L1.5 14.5 Q0.5 14.5 0.5 13.5 Z" fill="#fbdc75"/><rect x="9" y="10.5" width="3.2" height="4" fill="#f4c84a"/></svg>
<span id="t48" style="position:absolute;top:83.64px;font:400 12px/1 'Liberation Sans',sans-serif;color:#fff;white-space:pre;left:470.22px;transform-origin:0 0;transform:scaleX(1.0407);">learning</span>
<svg style="position:absolute;left:533px;top:82.5px;" width="13" height="15" viewBox="0 0 13 15"><path d="M0.5 1.5 Q0.5 0.5 1.5 0.5 L11 0.5 Q12 0.5 12 1.5 L12 13.5 Q12 14.5 11 14.5 L1.5 14.5 Q0.5 14.5 0.5 13.5 Z" fill="#fbdc75"/><rect x="9" y="10.5" width="3.2" height="4" fill="#f4c84a"/></svg>
<span id="t49" style="position:absolute;top:83.64px;font:400 12px/1 'Liberation Sans',sans-serif;color:#fff;white-space:pre;left:554.22px;transform-origin:0 0;transform:scaleX(0.9840);">research</span>
<svg style="position:absolute;left:617px;top:83.5px;" width="15" height="13" viewBox="0 0 15 13"><path d="M5 0 H10 L15 8.7 H10 Z" fill="#fbbc04"/><path d="M5 0 L0 8.7 L2.5 13 L7.5 4.3 Z" fill="#0f9d58"/><path d="M2.5 13 L5 8.7 H15 L12.5 13 Z" fill="#4285f4"/><path d="M10 8.7 H15 L12.5 13 Z" fill="#ea4335"/></svg>
<span id="t50" style="position:absolute;top:83.64px;font:400 12px/1 'Liberation Sans',sans-serif;color:#fff;white-space:pre;left:639.22px;transform-origin:0 0;transform:scaleX(0.9746);">seminar_docker - G...</span>
<svg style="position:absolute;left:768px;top:81.5px;" width="17" height="17" viewBox="0 0 17 17"><rect x="0" y="0" width="16.5" height="14" rx="3.5" fill="#2f7cf6"/><path d="M0 3.5 Q0 0 3.5 0 H8 V14 H3.5 Q0 14 0 10.5 Z" fill="#29c4e0"/><rect x="3" y="9" width="13.5" height="5" rx="2.5" fill="#6a3df0"/><path d="M5 16.5 L7.5 13 L10 16.5 Z" fill="#6a3df0"/><circle cx="8.3" cy="6.5" r="3.8" fill="#fff"/><path d="M8.3 6.5 V2.7 A3.8 3.8 0 0 1 12.1 6.5 Z" fill="#2f7cf6"/></svg>
<span id="t51" style="position:absolute;top:83.64px;font:400 12px/1 'Liberation Sans',sans-serif;color:#fff;white-space:pre;left:790.72px;transform-origin:0 0;transform:scaleX(1.0057);">Seminar</span>
<svg style="position:absolute;left:851px;top:84.5px;" width="16" height="11.5" viewBox="0 0 16 11.5"><rect x="0" y="0" width="16" height="11.5" rx="3" fill="#ff0000"/><path d="M6.56 3.22 L6.56 8.28 L10.56 5.75 Z" fill="#fff"/></svg>
<span id="t52" style="position:absolute;top:83.64px;font:400 12px/1 'Liberation Sans',sans-serif;color:#fff;white-space:pre;left:874.22px;transform-origin:0 0;transform:scaleX(1.0065);">How to setup Fireb...</span>
<!-- phone -->
<div style="position:absolute;left:1722px;top:246px;width:4px;height:57px;background:#303030;border-radius:0 1.5px 1.5px 0;"></div>
<div style="position:absolute;left:1722px;top:350px;width:4px;height:112px;background:#303030;border-radius:0 1.5px 1.5px 0;"></div>
<div style="position:absolute;left:1722px;top:639px;width:4px;height:93px;background:#303030;border-radius:0 1.5px 1.5px 0;"></div>
<div style="position:absolute;left:1318px;top:35.2px;width:406px;height:863.5px;border-radius:27.0px / 27.0px;background:#232323;"></div>
<div style="position:absolute;left:1321.2px;top:37.0px;width:399.6px;height:860.1px;border-radius:23.8px / 25.2px;background:#474747;"></div>
<div style="position:absolute;left:1322.9px;top:39.400000000000006px;width:396.2px;height:855.9px;border-radius:22.1px / 22.8px;background:#232323;"></div>
<div style="position:absolute;left:1324.4px;top:39.400000000000006px;width:393.2px;height:855.9px;border-radius:20.6px / 22.8px;background:#777;"></div>
<div style="position:absolute;left:1326.2px;top:40.400000000000006px;width:389.6px;height:854.0999999999999px;border-radius:18.8px / 21.8px;background:#6a6a6a;"></div>
<div style="position:absolute;left:1327.8px;top:40.400000000000006px;width:386.4px;height:854.0999999999999px;border-radius:17.2px / 21.8px;background:#5c5c5c;"></div>
<div style="position:absolute;left:1331px;top:40.400000000000006px;width:380px;height:854.0999999999999px;border-radius:14.0px / 21.8px;background:#555;"></div>
<div style="position:absolute;left:1333.4px;top:40.400000000000006px;width:375.2px;height:854.0999999999999px;border-radius:11.6px / 21.8px;background:#2a2a2a;"></div>
<div style="position:absolute;left:1334.4px;top:40.400000000000006px;width:373.2px;height:854.0999999999999px;border-radius:10.6px / 21.8px;background:#0d0d0d;"></div>
<div style="position:absolute;left:1334.4px;top:870px;width:373.2px;height:24.5px;border-radius:0 0 12px 12px / 0 0 22px 22px;background:linear-gradient(180deg,#050505 0,#0e0e0e 30%,#1f1f1f 60%,#2e2e2e 85%,#3a3a3a 100%);"></div>
<div style="position:absolute;left:1337px;top:57.6px;width:366px;height:813px;border-radius:14px;background:#000;overflow:hidden;"><div style="position:absolute;left:0;top:0;width:366px;height:770.4px;background:#fef9fe"></div></div>
<div style="position:absolute;left:1350px;top:70.5px;width:30px;height:30px;border-radius:50%;background:#000;"></div>
<span id="t53" style="position:absolute;top:74.15px;font:400 14px/1 'Liberation Sans',sans-serif;color:#666;white-space:pre;left:1389.09px;transform-origin:0 0;transform:scaleX(0.9424);">5:26</span>
<svg style="position:absolute;left:1423.7px;top:74.7px;" width="12.6" height="12.6" viewBox="0 0 12.6 12.6"><g transform="translate(6.3 6.3)"><circle r="3.5" fill="none" stroke="#5e5e5e" stroke-width="2.9"/><circle r="5.25" fill="none" stroke="#5e5e5e" stroke-width="2.1" stroke-dasharray="2.25 1.873" transform="rotate(-14)"/></g></svg>
<svg style="position:absolute;left:1444.5px;top:74.5px;" width="11" height="13" viewBox="0 0 11 13"><path d="M5.5 0.3 L10.7 2.3 V6 Q10.7 10.5 5.5 12.7 Q0.3 10.5 0.3 6 V2.3 Z" fill="#5e5e5e"/><path d="M4.3 4 L8 6.4 L4.3 8.8 Z" fill="#fef9fe"/></svg>
<svg style="position:absolute;left:1464.0px;top:75px;" width="11" height="12" viewBox="0 0 11 12"><path d="M1.5 4.5 L4 7 L9.5 1.5" stroke="#5e5e5e" stroke-width="1.5" fill="none"/><path d="M1 10.7 H10" stroke="#5e5e5e" stroke-width="1.5"/></svg>
<svg style="position:absolute;left:1483.5px;top:75px;" width="11" height="12" viewBox="0 0 11 12"><path d="M1.5 4.5 L4 7 L9.5 1.5" stroke="#5e5e5e" stroke-width="1.5" fill="none"/><path d="M1 10.7 H10" stroke="#5e5e5e" stroke-width="1.5"/></svg>
<svg style="position:absolute;left:1506px;top:76px;" width="8" height="8" viewBox="0 0 8 8"><path d="M0.5 4 L4 1 V7 Z" fill="#3a3a3a"/></svg>
<div style="position:absolute;left:1509px;top:69px;width:22px;height:22px;border-radius:50%;background:radial-gradient(circle at 55% 50%,#6a6068 0,#3a3538 1.6px,#2f2f2f 3.5px,#2b2b2b 11px);"></div>
<svg style="position:absolute;left:1656.2px;top:74.6px;" width="14.2" height="11.6" viewBox="0 0 15 12"><path d="M7.5 11.5 L0.3 3 Q7.5 -2.2 14.7 3 Z" fill="#5e5e5e"/></svg>
<svg style="position:absolute;left:1671px;top:75px;" width="12" height="11.3" viewBox="0 0 12 11.5"><path d="M11.5 0.3 V11.2 H0.5 Z" fill="#5e5e5e"/><path d="M8 5.5 V10 H9.6 V4 Z" fill="#fef9fe"/></svg>
<svg style="position:absolute;left:1688.6px;top:74.7px;" width="7.4" height="11.5" viewBox="0 0 8 12.5"><path d="M2.3 0 H5.7 V1.4 H7.2 Q8 1.4 8 2.2 V11.7 Q8 12.5 7.2 12.5 H0.8 Q0 12.5 0 11.7 V2.2 Q0 1.4 0.8 1.4 H2.3 Z" fill="#5e5e5e"/></svg>
<svg style="position:absolute;left:1353px;top:120.5px;" width="17" height="16" viewBox="0 0 17 16"><path d="M16 8 H2.5 M8.2 1.6 L1.8 8 L8.2 14.4" stroke="#1d1b20" stroke-width="1.7" fill="none"/></svg>
<span id="t54" style="position:absolute;top:119.01px;font:400 18.3px/1 'Liberation Sans',sans-serif;color:#1d1b20;white-space:pre;left:1399.81px;transform-origin:0 0;transform:scaleX(1.0923);">Customer List</span>
<div style="position:absolute;left:1343.7px;top:161px;width:352.3px;height:84.8px;background:#ece7f2;border-radius:11px;box-shadow:0 3px 4px -0.5px rgba(0,0,0,.21),0 1px 2px rgba(0,0,0,.10);"></div>
<div style="position:absolute;left:1351px;top:178.5px;width:53px;height:49.5px;border-radius:5px;overflow:hidden;"><svg width="53" height="50" viewBox="0 0 53 50" style="position:absolute;left:0;top:0"><defs><filter id="cb" x="-10%" y="-10%" width="120%" height="120%"><feGaussianBlur stdDeviation="1.1"/></filter><filter id="cb2" x="-10%" y="-10%" width="120%" height="120%"><feGaussianBlur stdDeviation="0.55"/></filter></defs><rect width="53" height="50" fill="#d4bfae"/><g filter="url(#cb)"><path d="M0 20 Q6 26 9 40 L14 50 H0 Z" fill="#e3cdb8"/><path d="M2 2 Q8 -2 14 2 L20 10 L10 22 L4 14 Z" fill="#c9aa9a"/><path d="M5 13 Q12 5 24 5 Q34 1 46 5 Q51 12 51 22 Q45 13 38 14 Q34 12 31 19 Q26 26 20 36 Q9 32 7 22 Z" fill="#8a796d"/><path d="M14 22 Q20 18 24 26 Q22 36 12 34 Z" fill="#9a8678"/><path d="M26 16 Q34 14 40 18 Q48 22 53 30 L53 44 Q46 48 40 44 Q30 44 24 50 L12 50 Q10 40 18 34 Q24 26 26 16 Z" fill="#e6d8cb"/><path d="M34 20 Q40 24 44 34 Q40 42 32 40 Q30 30 34 20 Z" fill="#f1e7de"/><path d="M18 44 Q28 40 36 46 L36 50 H18 Z" fill="#f6efe8"/><path d="M0 40 Q6 40 9 50 H0 Z" fill="#8b7261"/><path d="M40 10 Q46 4 50 14 Q52 22 48 26 Q44 18 40 10 Z" fill="#cdb7a6"/></g><g filter="url(#cb2)"><path d="M0 2 L2 2 L3 16 L0 19 Z" fill="#050505"/><path d="M15 0 H31 L29 2 Q22 3.5 17 2 Z" fill="#050505"/><path d="M46 0 H53 V16 Q50 10 47 5 Z" fill="#050505"/><path d="M53 26 V50 H35 Q38 45 44 44 Q49 42 51 34 Z" fill="#070606"/><ellipse cx="25.5" cy="24.5" rx="4.8" ry="4.3" fill="#5f7078"/><ellipse cx="25.6" cy="24.3" rx="3" ry="3.3" fill="#2b1d18"/><ellipse cx="45.3" cy="19.8" rx="3.4" ry="4.2" fill="#5a6a72"/><ellipse cx="45" cy="19.6" rx="2.3" ry="3.2" fill="#2b1d18"/><path d="M37 35 Q41 32.5 44 35 Q43 39.5 41 40 Q38 38 37 35 Z" fill="#e8838c"/><path d="M26 9 l2 4 M31 8 l1.5 4 M36 9 l1 4 M41 11 l0.5 3" stroke="#5d5048" stroke-width="1.2"/></g></svg></div>
<span id="t55" style="position:absolute;top:176.88px;font:700 15.5px/1 'Liberation Sans',sans-serif;color:#1d1b20;white-space:pre;left:1417.49px;transform-origin:0 0;transform:scaleX(0.9433);">Minh Dep Trai</span>
<span id="t56" style="position:absolute;top:198.07px;font:400 13.5px/1 'Liberation Sans',sans-serif;color:#49454f;white-space:pre;left:1417.62px;transform-origin:0 0;transform:scaleX(0.9716);">tuan@gmail.com</span>
<span id="t57" style="position:absolute;top:215.57px;font:400 13.5px/1 'Liberation Sans',sans-serif;color:#a8a6aa;white-space:pre;left:1417.62px;transform-origin:0 0;transform:scaleX(0.9088);">Tdq6eR4O2VEWPuAQx851</span>
<svg style="position:absolute;left:1615px;top:194.5px;" width="18" height="18" viewBox="0 0 18 18"><path d="M1.5 13 V16.5 H5 L14 7.5 L10.5 4 Z M16.3 5.2 Q16.9 4.6 16.3 4 L14 1.7 Q13.4 1.1 12.8 1.7 L11.4 3.1 L14.9 6.6 Z" fill="#49454f"/></svg>
<svg style="position:absolute;left:1660px;top:194.5px;" width="14" height="18" viewBox="0 0 14 18"><path d="M1.8 15 Q1.8 16.8 3.6 16.8 H10.4 Q12.2 16.8 12.2 15 V4.5 H1.8 Z M13 1.8 H10 L9.1 0.9 H4.9 L4 1.8 H1 V3.5 H13 Z" fill="#49454f"/></svg>
<div style="position:absolute;left:1343.7px;top:260.4px;width:352.3px;height:84.8px;background:#ece7f2;border-radius:11px;box-shadow:0 3px 4px -0.5px rgba(0,0,0,.21),0 1px 2px rgba(0,0,0,.10);"></div>
<div style="position:absolute;left:1351px;top:278.5px;width:53px;height:49.5px;border-radius:6px;overflow:hidden;"><svg width="53" height="50" viewBox="0 0 53 50" style="position:absolute;left:0;top:0"><defs><filter id="bb" x="-10%" y="-10%" width="120%" height="120%"><feGaussianBlur stdDeviation="0.45"/></filter></defs><rect width="53" height="50" fill="#1fa78d"/><g filter="url(#bb)"><path d="M1.5 4 V49" stroke="#e6dc5a" stroke-width="3" stroke-dasharray="2.6 2.2"/><text x="8.5" y="10.8" font-family="Liberation Sans" font-weight="700" font-size="10.5" fill="#fbe9d8" stroke="#fbe9d8" stroke-width="1.2" textLength="38" lengthAdjust="spacingAndGlyphs" transform="rotate(-3 27 8)">Wimpy Kid</text><text x="8.5" y="10.8" font-family="Liberation Sans" font-weight="700" font-size="10.5" fill="#f5873a" textLength="38" lengthAdjust="spacingAndGlyphs" transform="rotate(-3 27 8)">Wimpy Kid</text><text x="8" y="20.5" font-family="Liberation Sans" font-weight="700" font-size="8" fill="#e4e56c" stroke="#e4e56c" stroke-width="0.5" textLength="41" lengthAdjust="spacingAndGlyphs">NO BRAINER</text><rect x="12" y="23.5" width="33" height="27" fill="#f2f1ec"/><path d="M13 28 H44 M13 32 H44 M13 36 H44 M13 40 H44 M13 44 H44" stroke="#e2e0da" stroke-width="0.7"/><path d="M22 27 L24 25.5 L24.5 29 M23 30 Q21 31 22 34 Q24 36 26.5 34.5 Q28 32 26.5 30 Q25 29 23 30 Z M23 35 Q21 38 22 42 L27 43 Q29 40 27 36 M22.5 42 L22 49 M26.5 43 L27.5 49 M21 44 H31" stroke="#444" stroke-width="0.8" fill="none"/><path d="M23 29.5 L28 28.5" stroke="#333" stroke-width="1"/><path d="M21.5 44.3 H30" stroke="#111" stroke-width="1.3"/><path d="M37 33.5 H46 M32.5 35.6 H49 M33 37.7 H50 M33 39.8 H48" stroke="#2a3c9c" stroke-width="1.5" stroke-dasharray="2.4 0.6"/></g></svg></div>
<span id="t58" style="position:absolute;top:276.88px;font:700 15.5px/1 'Liberation Sans',sans-serif;color:#1d1b20;white-space:pre;left:1417.49px;transform-origin:0 0;transform:scaleX(0.9067);">Anh Khoa</span>
<span id="t59" style="position:absolute;top:298.07px;font:400 13.5px/1 'Liberation Sans',sans-serif;color:#49454f;white-space:pre;left:1417.62px;transform-origin:0 0;transform:scaleX(0.9677);">khoa@gmail.com</span>
<span id="t60" style="position:absolute;top:315.57px;font:400 13.5px/1 'Liberation Sans',sans-serif;color:#a8a6aa;white-space:pre;left:1417.62px;transform-origin:0 0;transform:scaleX(0.9466);">wCzOhSPfnM4cXWz8wl50</span>
<svg style="position:absolute;left:1615px;top:294.5px;" width="18" height="18" viewBox="0 0 18 18"><path d="M1.5 13 V16.5 H5 L14 7.5 L10.5 4 Z M16.3 5.2 Q16.9 4.6 16.3 4 L14 1.7 Q13.4 1.1 12.8 1.7 L11.4 3.1 L14.9 6.6 Z" fill="#49454f"/></svg>
<svg style="position:absolute;left:1660px;top:294.5px;" width="14" height="18" viewBox="0 0 14 18"><path d="M1.8 15 Q1.8 16.8 3.6 16.8 H10.4 Q12.2 16.8 12.2 15 V4.5 H1.8 Z M13 1.8 H10 L9.1 0.9 H4.9 L4 1.8 H1 V3.5 H13 Z" fill="#49454f"/></svg>
<div style="position:absolute;left:1638.5px;top:764px;width:50px;height:49.5px;border-radius:14px;background:#e9ddff;box-shadow:0 1px 3px rgba(0,0,0,.2),0 4px 8px 3px rgba(0,0,0,.12);"></div>
<svg style="position:absolute;left:1656.5px;top:782px;" width="14" height="14" viewBox="0 0 14 14"><path d="M7 0.5 V13.5 M0.5 7 H13.5" stroke="#2a0a66" stroke-width="1.8"/></svg>
<svg style="position:absolute;left:1406px;top:841.5px;" width="14" height="15" viewBox="0 0 14 15"><path d="M13 0.8 V14.2 L0.8 7.5 Z" fill="#9e9e9e"/></svg>
<div style="position:absolute;left:1513px;top:842.5px;width:13px;height:13px;border-radius:50%;background:#9e9e9e;"></div>
<div style="position:absolute;left:1618.2px;top:842.3px;width:13.6px;height:13.6px;border-radius:1px;background:#9e9e9e;"></div>
<!-- emulator toolbar -->
<div style="position:absolute;left:1730px;top:35px;width:64.5px;height:514.5px;box-sizing:border-box;border:1px solid #000;background:#efefef;"></div>
<div style="position:absolute;left:1745px;top:49.5px;width:8px;height:1.5px;background:#93b2bf;"></div>
<svg style="position:absolute;left:1772px;top:46px;" width="8" height="8" viewBox="0 0 8 8"><path d="M0.8 0.8 L7.2 7.2 M7.2 0.8 L0.8 7.2" stroke="#4f8196" stroke-width="1.5"/></svg>
<svg style="position:absolute;left:1752px;top:72.5px;" width="20" height="20" viewBox="0 0 20 20"><path d="M6.2 4.2 A8 8 0 1 0 13.8 4.2" stroke="#5d808e" stroke-width="2" fill="none"/><path d="M10 0.5 V9.5" stroke="#5d808e" stroke-width="2"/></svg>
<svg style="position:absolute;left:1752px;top:117px;" width="20" height="20" viewBox="0 0 20 20"><path d="M1 7 H5 L10 2 V18 L5 13 H1 Z" fill="#5d808e"/><path d="M12.3 5.6 Q16 10 12.3 14.4 Z" fill="#5d808e" stroke="#5d808e" stroke-width="1"/><path d="M12.2 1.8 A8.5 8.5 0 0 1 12.2 18.2" stroke="#5d808e" stroke-width="1.9" fill="none"/></svg>
<svg style="position:absolute;left:1754px;top:161px;" width="20" height="20" viewBox="0 0 20 20"><path d="M1 7 H5 L10 2 V18 L5 13 H1 Z" fill="#5d808e"/><path d="M12.5 6 Q15.5 10 12.5 14 Z" fill="#5d808e" stroke="#5d808e" stroke-width="1.5"/></svg>
<svg style="position:absolute;left:1750px;top:203px;" width="24" height="24" viewBox="0 0 24 24"><rect x="5.8" y="4" width="12.4" height="17" rx="1.6" transform="rotate(-45 12 12.5)" stroke="#5d808e" stroke-width="2.3" fill="none"/><rect x="5.8" y="18.6" width="12.4" height="2.4" transform="rotate(-45 12 12.5)" fill="#5d808e"/><path d="M13 1.2 A9.5 9.5 0 0 1 22.5 9" stroke="#5d808e" stroke-width="1.6" fill="none"/></svg>
<svg style="position:absolute;left:1750px;top:247px;" width="24" height="24" viewBox="0 0 24 24"><rect x="5.8" y="4" width="12.4" height="17" rx="1.6" transform="rotate(45 12 12.5)" stroke="#5d808e" stroke-width="2.3" fill="none"/><rect x="5.8" y="18.6" width="12.4" height="2.4" transform="rotate(45 12 12.5)" fill="#5d808e"/><path d="M11 1.2 A9.5 9.5 0 0 0 1.5 9" stroke="#5d808e" stroke-width="1.6" fill="none"/></svg>
<svg style="position:absolute;left:1751.5px;top:292.5px;" width="21" height="19" viewBox="0 0 21 19"><path d="M7 0.5 H14 L15.8 2.8 H19 Q20.5 2.8 20.5 4.3 V16.5 Q20.5 18 19 18 H2 Q0.5 18 0.5 16.5 V4.3 Q0.5 2.8 2 2.8 H5.2 Z" fill="#5d808e"/><circle cx="10.5" cy="10.3" r="4.6" fill="#eee"/><circle cx="10.5" cy="10.3" r="2.6" fill="#5d808e"/></svg>
<svg style="position:absolute;left:1753px;top:338px;" width="19" height="19" viewBox="0 0 19 19"><circle cx="7" cy="7" r="5.8" stroke="#5d808e" stroke-width="1.7" fill="none"/><path d="M11.3 11.3 L17.5 17.5" stroke="#5d808e" stroke-width="2"/><path d="M4.3 7 H9.7 M7 4.3 V9.7" stroke="#5d808e" stroke-width="1.2"/></svg>
<svg style="position:absolute;left:1754.5px;top:383px;" width="15" height="16" viewBox="0 0 15 16"><path d="M13.2 1.5 V14.5 L1.5 8 Z" stroke="#5d808e" stroke-width="1.7" fill="none" stroke-linejoin="round"/></svg>
<svg style="position:absolute;left:1754px;top:427px;" width="16" height="16" viewBox="0 0 16 16"><circle cx="8" cy="8" r="6.5" stroke="#5d808e" stroke-width="1.6" fill="none"/></svg>
<svg style="position:absolute;left:1754px;top:471px;" width="16" height="16" viewBox="0 0 16 16"><rect x="1.2" y="1.7" width="13" height="12.6" rx="1" stroke="#5d808e" stroke-width="1.6" fill="none"/></svg>
<div style="position:absolute;left:1754.1000000000001px;top:521.4px;width:3.2px;height:3.2px;border-radius:50%;background:#5d808e;"></div>
<div style="position:absolute;left:1760.4px;top:521.4px;width:3.2px;height:3.2px;border-radius:50%;background:#5d808e;"></div>
<div style="position:absolute;left:1766.7px;top:521.4px;width:3.2px;height:3.2px;border-radius:50%;background:#5d808e;"></div>
<!-- taskbar -->
<div style="position:absolute;left:0px;top:1032px;width:1920px;height:48px;background:#202020;"></div>
<div style="position:absolute;left:705px;top:1045px;width:11px;height:11px;background:linear-gradient(135deg,#6ddcff,#1aa2f3);"></div>
<div style="position:absolute;left:717px;top:1045px;width:11px;height:11px;background:linear-gradient(135deg,#6ddcff,#1aa2f3);"></div>
<div style="position:absolute;left:705px;top:1057px;width:11px;height:11px;background:linear-gradient(135deg,#6ddcff,#1aa2f3);"></div>
<div style="position:absolute;left:717px;top:1057px;width:11px;height:11px;background:linear-gradient(135deg,#6ddcff,#1aa2f3);"></div>
<div style="position:absolute;left:741px;top:1040px;width:219px;height:32px;box-sizing:border-box;border-radius:16px;background:linear-gradient(180deg,#3e3e3e,#363636);border:1px solid #4a4a4a;"></div>
<svg style="position:absolute;left:752px;top:1048px;" width="16" height="16" viewBox="0 0 16 16"><circle cx="6.8" cy="6.8" r="5.3" stroke="#f0f0f0" stroke-width="1.5" fill="none"/><path d="M10.8 10.8 L15 15" stroke="#f0f0f0" stroke-width="1.6"/></svg>
<span id="t61" style="position:absolute;top:1049.15px;font:400 14px/1 'Liberation Sans',sans-serif;color:#e6e6e6;white-space:pre;left:777.09px;transform-origin:0 0;transform:scaleX(0.9621);">Search</span>
<svg style="position:absolute;left:911px;top:1044px;" width="48" height="24" viewBox="0 0 48 24"><path d="M0 22 L7 14 L12 17 L18 8 L22 2 L26 8 L30 5 L34 11 L38 8 L43 15 L47 22 Z" fill="#c48878"/><path d="M12 17 L22 2 L23 22 H8 Z" fill="#e3b3a3"/><path d="M22 2 L26 8 L27 22 H23 Z" fill="#a8685c"/><path d="M30 5 L34 11 L35 22 H27 L26 8 Z" fill="#d79c8a"/><path d="M38 8 L43 15 L47 22 H35 L34 11 Z" fill="#e0a896"/><path d="M40 12 L43 15 L47 22 H41 Z" fill="#b8766a"/><path d="M14 14 L16 22 M19 9 L20 22 M31 9 L31.5 22 M37 12 L38 22" stroke="#a56b60" stroke-width="0.8"/><path d="M0 22 H47 V20 Q24 17 0 22 Z" fill="#85697d"/><path d="M24 22.5 H45 V21.3 Q34 19.5 24 22.5 Z" fill="#d39a36"/></svg>
<svg style="position:absolute;left:973px;top:1044px;" width="24" height="24" viewBox="0 0 24 24"><path d="M1 4 Q1 2.5 2.5 2.5 H8.5 L11 5 H21.5 Q23 5 23 6.5 V9 H1 Z" fill="#e6a420"/><rect x="1" y="6.5" width="22" height="15" rx="1.5" fill="#fcd354"/><rect x="1" y="15" width="22" height="6.5" rx="1.5" fill="#f4c030"/><rect x="7" y="16.5" width="10" height="5" rx="1.2" fill="#1b82d8"/><rect x="7" y="19.5" width="10" height="2" fill="#1565b8"/></svg>
<svg style="position:absolute;left:1017px;top:1044px;" width="24" height="24" viewBox="0 0 24 24"><path d="M17.5 0.8 L23.2 3.5 V20.5 L17.5 23.2 L6 13.5 L2.5 16.5 L0.8 15.5 V8.5 L2.5 7.5 L6 10.5 Z" fill="#8b5fd0"/><path d="M17.5 0.8 L23.2 3.5 V20.5 L17.5 23.2 Z" fill="#c19bf2"/><path d="M17.5 7.5 L11.5 12 L17.5 16.5 Z" fill="#202020"/><path d="M2.8 9.8 L5.2 12 L2.8 14.2 Z" fill="#202020"/></svg>
<svg style="position:absolute;left:1061px;top:1044px;" width="24" height="24" viewBox="0 0 24 24"><path d="M17.3 0.8 L23.2 3.6 V20.4 L17.3 23.2 L7.2 14 L3 17.3 L0.8 16.2 L5.3 12 L0.8 7.8 L3 6.7 L7.2 10 Z" fill="#1f8ad2"/><path d="M17.3 0.8 L23.2 3.6 V20.4 L17.3 23.2 Z" fill="#2eaaf5"/><path d="M17.3 7.2 L11.3 12 L17.3 16.8 Z" fill="#202020"/></svg>
<svg style="position:absolute;left:1105px;top:1044px;" width="24" height="24" viewBox="0 0 24 24"><circle cx="12" cy="12" r="11.5" fill="#fbc116"/><path d="M12 12 L2.05 6.25 A11.5 11.5 0 0 1 21.95 6.25 Z" fill="#e33b2e"/><path d="M12 12 L2.05 6.25 A11.5 11.5 0 0 0 12 23.5 L16.5 14.6 Z" fill="#2ba24c"/><path d="M12 6.3 H21.95 A11.5 11.5 0 0 0 2.05 6.25 L7 14.8 Z" fill="#e33b2e"/><circle cx="12" cy="12" r="5.4" fill="#fff"/><circle cx="12" cy="12" r="4.3" fill="#3f82f0"/></svg>
<div style="position:absolute;left:1141px;top:1036px;width:40px;height:40px;border-radius:4px;background:#2e2e2e;box-shadow:inset 0 0 0 1px #383838;"></div>
<svg style="position:absolute;left:1149px;top:1044px;" width="24" height="24" viewBox="0 0 24 24"><circle cx="12" cy="12" r="11.8" fill="#fff"/><rect x="7.5" y="5" width="9.5" height="14" rx="1.5" fill="#fff" stroke="#3f7fe8" stroke-width="1.6"/><path d="M9 7.5 Q13.5 12 9 16.5 Z" fill="#35a853"/><rect x="10" y="6" width="3" height="1.2" fill="#3f7fe8"/></svg>
<div style="position:absolute;left:1153px;top:1072px;width:16px;height:2.6px;border-radius:1.3px;background:#f0826c;"></div>
<svg style="position:absolute;left:1193.5px;top:1045px;" width="23" height="23" viewBox="0 0 23 23"><circle cx="11.5" cy="11.5" r="11" fill="#2aa1da"/><path d="M4.5 11.3 L17.6 6 Q18.5 5.7 18.3 6.8 L16.2 17 Q16 17.9 15.1 17.4 L11.8 15 L10.2 16.6 Q9.8 16.9 9.7 16.4 L9.4 13.3 L15.6 7.8 L8 12.6 L4.8 11.9 Q4 11.6 4.5 11.3 Z" fill="#fff"/></svg>
<div style="position:absolute;left:982px;top:1072px;width:6px;height:2.6px;border-radius:1.3px;background:#8a8a8a;"></div>
<div style="position:absolute;left:1070px;top:1072px;width:6px;height:2.6px;border-radius:1.3px;background:#8a8a8a;"></div>
<div style="position:absolute;left:1114px;top:1072px;width:6px;height:2.6px;border-radius:1.3px;background:#8a8a8a;"></div>
<div style="position:absolute;left:1202px;top:1072px;width:6px;height:2.6px;border-radius:1.3px;background:#8a8a8a;"></div>
<svg style="position:absolute;left:1728px;top:1051px;" width="12" height="8" viewBox="0 0 12 8"><path d="M1 6.8 L6 1.8 L11 6.8" stroke="#fff" stroke-width="1.5" fill="none"/></svg>
<svg style="position:absolute;left:1757.5px;top:1048.5px;" width="17" height="13" viewBox="0 0 17 13"><circle cx="8.5" cy="11.2" r="1.3" fill="#fff"/><path d="M5.4 8.6 Q8.5 6 11.6 8.6" stroke="#fff" stroke-width="1.2" fill="none"/><path d="M3.1 6.2 Q8.5 1.8 13.9 6.2" stroke="#fff" stroke-width="1.2" fill="none"/><path d="M0.8 3.9 Q8.5 -2.3 16.2 3.9" stroke="#fff" stroke-width="1.2" fill="none"/></svg>
<svg style="position:absolute;left:1782px;top:1048.5px;" width="17" height="15" viewBox="0 0 17 15"><path d="M0.8 5 H3.8 L7.3 1.5 V13.5 L3.8 10 H0.8 Z" stroke="#fff" stroke-width="1.1" fill="none" stroke-linejoin="round"/><path d="M9.5 5.2 Q11 7.5 9.5 9.8 M11.6 3.3 Q14.2 7.5 11.6 11.7 M13.7 1.4 Q17.5 7.5 13.7 13.6" stroke="#fff" stroke-width="1.1" fill="none"/></svg>
<span id="t62" style="position:absolute;top:1042.84px;font:400 12px/1 'Liberation Sans',sans-serif;color:#fff;white-space:pre;right:42.88px;transform-origin:100% 0;transform:scaleX(1.0053);">5:26 PM</span>
<span id="t63" style="position:absolute;top:1058.84px;font:400 12px/1 'Liberation Sans',sans-serif;color:#fff;white-space:pre;right:42.88px;transform-origin:100% 0;transform:scaleX(1.0552);">11/10/2023</span>
<svg style="position:absolute;left:1884.5px;top:1048px;" width="15" height="16" viewBox="0 0 15 16"><path d="M7.5 1 Q12 1 12 6 V10.2 L13.8 12.4 H1.2 L3 10.2 V6 Q3 1 7.5 1 Z" stroke="#fff" stroke-width="1.1" fill="none" stroke-linejoin="round"/><path d="M5.8 13.2 Q7.5 15.5 9.2 13.2" stroke="#fff" stroke-width="1.1" fill="none"/></svg>
</div></body></html>
